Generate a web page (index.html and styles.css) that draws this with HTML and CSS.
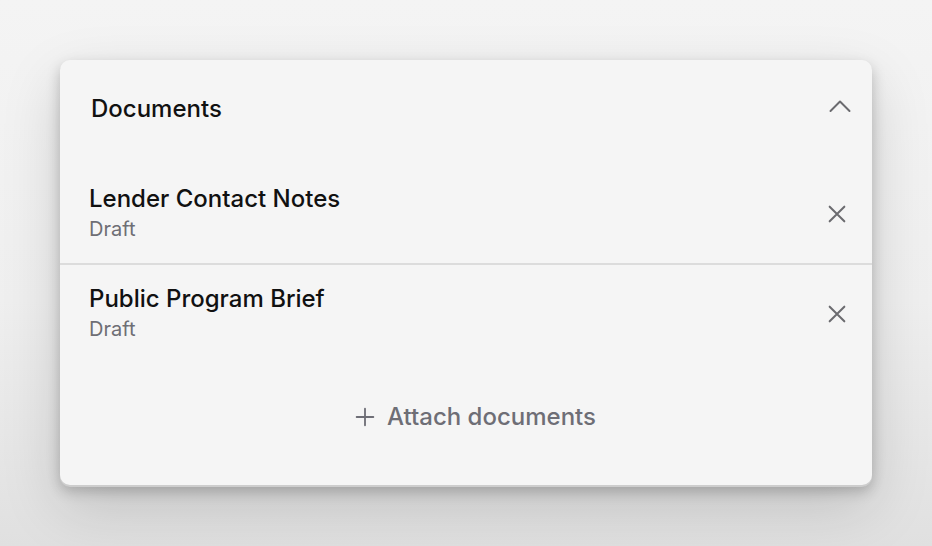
FILE: index.html
```html
<!DOCTYPE html>
<html lang="en">
<head>
    <meta charset="UTF-8">
    <meta name="viewport" content="width=device-width, initial-scale=1.0">
    <title>Documents</title>
    <link rel="stylesheet" href="styles.css">
</head>
<body>
    <section class="panel">
        <header class="panel-header">
            <h2>Documents</h2>
            <button class="icon-btn collapse-btn" aria-label="Collapse">
                <svg width="24" height="24" viewBox="0 0 24 24" fill="none" stroke="currentColor" stroke-width="2" stroke-linecap="round" stroke-linejoin="round"><path d="M2.5 17l9.5-9.5 9.5 9.5"/></svg>
            </button>
        </header>

        <ul class="doc-list">
            <li class="doc-item">
                <div class="doc-info">
                    <span class="doc-title">Lender Contact Notes</span>
                    <span class="doc-status">Draft</span>
                </div>
                <button class="icon-btn" aria-label="Remove">
                    <svg width="22" height="22" viewBox="0 0 24 24" fill="none" stroke="currentColor" stroke-width="2.2" stroke-linecap="round"><path d="M4 4l16 16M20 4L4 20"/></svg>
                </button>
            </li>
            <li class="doc-item">
                <div class="doc-info">
                    <span class="doc-title">Public Program Brief</span>
                    <span class="doc-status">Draft</span>
                </div>
                <button class="icon-btn" aria-label="Remove">
                    <svg width="22" height="22" viewBox="0 0 24 24" fill="none" stroke="currentColor" stroke-width="2.2" stroke-linecap="round"><path d="M4 4l16 16M20 4L4 20"/></svg>
                </button>
            </li>
        </ul>

        <button class="attach-btn">
            <svg width="20" height="20" viewBox="0 0 24 24" fill="none" stroke="currentColor" stroke-width="2.2" stroke-linecap="round"><path d="M12 2v20M2 12h20"/></svg>
            Attach documents
        </button>
    </section>
</body>
</html>
```

FILE: styles.css
```css
/* Page */
body {
    font-family: 'Inter', 'Liberation Sans', sans-serif;
    margin: 0;
    padding: 60px;
    min-height: 100vh;
    box-sizing: border-box;
    background: linear-gradient(180deg, #f4f4f4 0%, #efefef 55%, #e0e0e0 100%);
    color: #111;
}

/* Panel card */
.panel {
    width: 812px;
    height: 425px;
    box-sizing: border-box;
    background: #f5f5f5;
    border-radius: 10px;
    box-shadow: 0 2px 0 #cdcdcd, 0 6px 14px rgba(0, 0, 0, 0.22), 0 22px 60px rgba(0, 0, 0, 0.15);
    display: flex;
    flex-direction: column;
}

.panel-header {
    display: flex;
    align-items: flex-start;
    justify-content: space-between;
    padding: 35px 20px 0 31px;
    height: 64px;
    box-sizing: border-box;
}

.panel-header h2 {
    margin: 0;
    font-size: 24px;
    line-height: 28px;
    font-weight: 500;
    color: #111;
}

.icon-btn {
    background: none;
    border: none;
    padding: 0;
    color: #6b6b6f;
    cursor: pointer;
    display: flex;
}

.collapse-btn {
    margin-top: -1px;
}

/* Document rows */
.doc-list {
    list-style: none;
    margin: 40px 0 0;
    padding: 0;
}

.doc-item {
    display: flex;
    align-items: center;
    justify-content: space-between;
    padding: 0 24px 0 29px;
    height: 99px;
    box-sizing: border-box;
}

.doc-item + .doc-item {
    border-top: 2px solid #dcdcdc;
}

.doc-info {
    display: flex;
    flex-direction: column;
}

.doc-title {
    font-size: 24px;
    line-height: 28px;
    font-weight: 500;
    color: #111;
}

.doc-status {
    font-size: 20px;
    line-height: 26px;
    margin-top: 3px;
    color: #6e6e74;
}

/* Attach */
.attach-btn {
    align-self: center;
    margin: 41px 0 0 19px;
    padding: 0;
    display: flex;
    align-items: center;
    gap: 12px;
    background: none;
    border: none;
    font-family: inherit;
    font-size: 24px;
    line-height: 28px;
    font-weight: 500;
    color: #6e6e76;
    cursor: pointer;
}
```
